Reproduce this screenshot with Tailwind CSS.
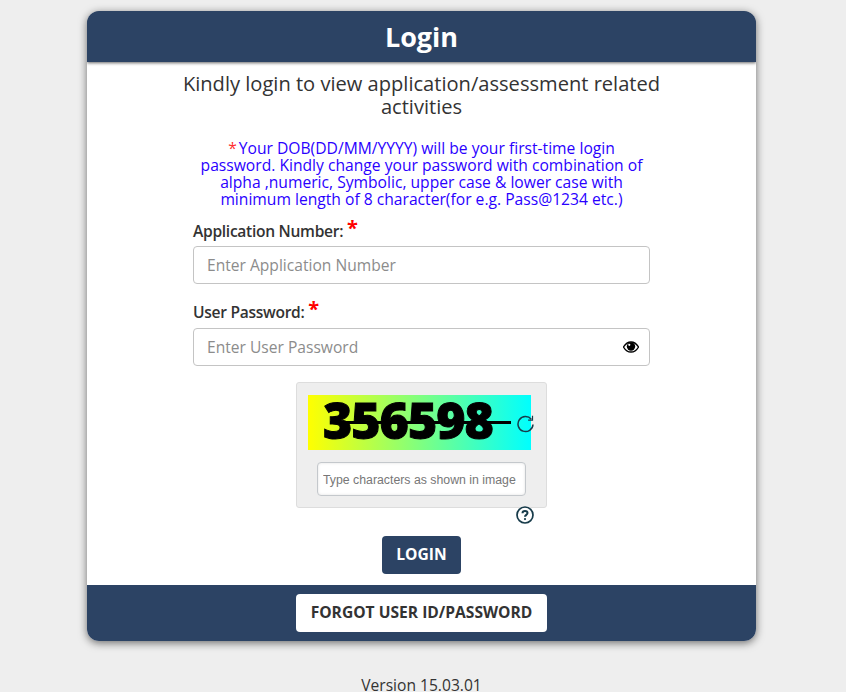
<!DOCTYPE html>
<html lang="en">
<head>
    <meta charset="UTF-8">
    <title>Login</title>
    <script src="https://cdn.jsdelivr.net/npm/@tailwindcss/browser@4"></script>
</head>
<body class="bg-[#eeeeee] text-[#333333] font-['Open_Sans',sans-serif] h-[692px] overflow-hidden">
    <div class="w-[669px] ml-[87px] pt-[11px]">
        <div class="bg-white rounded-[12px] shadow-[0_2px_8px_rgba(0,0,0,0.55)] overflow-hidden">
            <div class="h-[51px] bg-[#2c4364] text-white text-center text-[27px] font-bold leading-[52px] shadow-[0_1px_3px_rgba(0,0,0,0.6)] relative">Login</div>

            <div class="flex flex-col items-center pt-[10px]">
                <p class="w-[490px] text-center text-[20.1px] leading-[23px]">Kindly login to view application/assessment related activities</p>

                <p class="w-[457px] mt-[22px] text-center text-[15.65px] leading-[17px] text-[#2a00ff]"><span class="text-[#ff3030] mr-[2px]">*</span>Your DOB(DD/MM/YYYY) will be your first-time login password. Kindly change your password with combination of alpha ,numeric, Symbolic, upper case &amp; lower case with minimum length of 8 character(for e.g. Pass@1234 etc.)</p>

                <div class="w-[457px] mt-[9px]">
                    <label class="block h-[26px] text-[15.6px] font-semibold tracking-[-0.3px] leading-[28px]">Application Number: <span class="text-[#ff0000] text-[20px] font-bold leading-none align-[2px]">*</span></label>
                    <input type="text" placeholder="Enter Application Number" class="block w-full h-[38px] mt-[3px] px-[13px] bg-white border border-[#c4c4c4] rounded-[4px] text-[15.6px] placeholder:text-[#8c8c8c]">

                    <label class="block h-[26px] mt-[14px] text-[15.6px] font-semibold tracking-[-0.3px] leading-[28px]">User Password: <span class="text-[#ff0000] text-[20px] font-bold leading-none align-[2px]">*</span></label>
                    <div class="relative mt-[4px]">
                        <input type="password" placeholder="Enter User Password" class="block w-full h-[38px] px-[13px] bg-white border border-[#c4c4c4] rounded-[4px] text-[15.6px] placeholder:text-[#8c8c8c]">
                        <svg class="absolute right-[11px] top-[13px]" width="16" height="12" viewBox="0 0 16 12">
                            <path d="M0.5 6C2.5 2.6 5 1 8 1s5.5 1.6 7.5 5c-2 3.4-4.500 5-7.500 5S2.500 9.400 0.500 6z" fill="white" stroke="black" stroke-width="1.300"/>
                            <circle cx="8" cy="5.500" r="4.200" fill="black"/>
                            <circle cx="6.300" cy="3.800" r="1.100" fill="white"/>
                        </svg>
                    </div>
                </div>

                <div class="relative w-[251px] h-[126px] mt-[16px] bg-[#eeeeee] border border-[#dddddd] rounded-[3px]">
                    <div class="relative w-[223px] h-[55px] ml-[11px] mt-[12px] bg-linear-to-r/srgb from-[#ffff00] to-[#00ffff]">
                        <span class="absolute left-[15px] top-[-2px] text-[50px] leading-[55px] font-extrabold tracking-[-1px] text-black [-webkit-text-stroke:1px_black] blur-[0.4px]">356598</span>
                        <div class="absolute left-[22px] top-[26px] w-[181px] h-[3px] bg-black blur-[0.3px]"></div>
                    </div>
                    <svg class="absolute left-[220px] top-[32px]" width="18" height="18" viewBox="0 0 18 18" fill="none" stroke="#173b4a" stroke-width="1.500">
                        <path d="M14.300 4.300A7.500 7.500 0 1 0 16 9.500"/>
                        <path d="M15.500 0.800v4.400h-4.400" stroke-width="1.200"/>
                    </svg>
                    <input type="text" placeholder="Type characters as shown in image" class="absolute left-[20px] top-[79px] w-[209px] h-[34px] px-[5px] pt-[1px] bg-white border border-[#c4c8cc] rounded-[4px] font-['Liberation_Sans',sans-serif] text-[12.3px] placeholder:text-[#777777] shadow-[inset_0_0_3px_rgba(0,0,0,0.12)]">
                </div>

                <div class="w-[457px] h-[14px] relative">
                    <svg class="absolute left-[323px] top-[-2px]" width="18" height="18" viewBox="0 0 18 18" fill="none">
                        <circle cx="9" cy="9" r="8" stroke="#173b4a" stroke-width="1.700"/>
                        <path d="M6.500 7.200C6.500 5.700 7.600 4.900 9 4.900s2.500.8 2.500 2.100c0 1.800-2.500 1.900-2.500 3.800" stroke="#173b4a" stroke-width="2"/>
                        <circle cx="9" cy="13.100" r="1.100" fill="#173b4a"/>
                    </svg>
                </div>

                <button class="w-[79px] h-[38px] mt-[14px] bg-[#2c4364] text-white text-[15.6px] font-bold rounded-[4px]">LOGIN</button>
            </div>

            <div class="h-[56px] mt-[11px] bg-[#2c4364] flex justify-center pt-[9px]">
                <button class="w-[251px] h-[38px] bg-white text-[#333333] text-[15.6px] font-bold rounded-[4px]">FORGOT USER ID/PASSWORD</button>
            </div>
        </div>
    </div>
    <p class="mt-[33px] pr-[3px] text-center text-[15.6px] leading-[22px] text-[#333333]">Version 15.03.01</p>
</body>
</html>
